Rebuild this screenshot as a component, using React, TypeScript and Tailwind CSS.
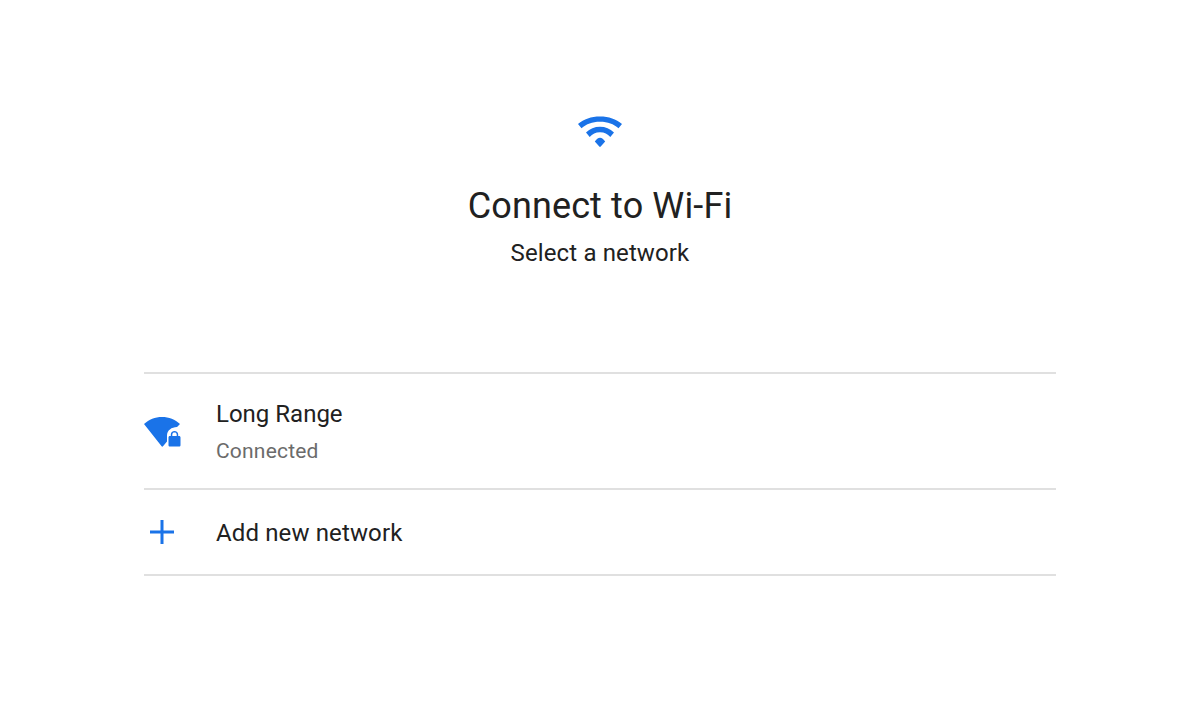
import React from 'react';

const font = "font-['Roboto',sans-serif]";

const WifiIcon = () => (
  <svg width="48" height="36" viewBox="0 0 48 36" fill="#1a73e8">
    <path d="M2 12 C8 7 15 4.500 24 4.500 C33 4.500 40 7 46 12 L42.500 16.300 C37.500 12 32 9.700 24 9.700 C16 9.700 10.500 12 5.500 16.300 Z" />
    <path d="M10 20.500 C14 16.800 18.500 14.800 24 14.800 C29.500 14.800 34 16.800 38 20.500 L34.300 25 C31.500 21.800 28.500 20.200 24 20.200 C19.500 20.200 16.500 21.800 13.700 25 Z" />
    <path d="M18.800 29.500 C20.500 27.200 22 25.800 24 25.800 C26 25.800 27.500 27.200 29.200 29.500 L24.700 34.500 C24.300 35 23.700 35 23.300 34.500 Z" />
  </svg>
);

const WifiLockIcon = () => (
  <svg width="38" height="36" viewBox="0 0 38 36">
    <path
      fill="#1a73e8"
      d="M0 10 C5 5.500 11 3 18 3 C25 3 31 5.500 36 10 L33 13 C27.500 13 23 16.500 23 21.500 L23 27.500 L19 32.300 C18.600 32.800 18 32.800 17.600 32.300 Z"
    />
    <path
      fill="#1a73e8"
      fillRule="evenodd"
      transform="translate(0 2)"
      d="M26 20 L26.800 20 L26.800 18.500 C26.800 16.300 28.500 15 30.500 15 C32.500 15 34.200 16.300 34.200 18.500 L34.200 20 L35 20 C36 20 36.500 20.600 36.500 21.500 L36.500 29 C36.500 30 36 30.500 35 30.500 L26 30.500 C25 30.500 24.500 30 24.500 29 L24.500 21.500 C24.500 20.600 25 20 26 20 Z M28.300 20 L32.700 20 L32.700 18.500 C32.700 17 31.700 16.400 30.500 16.400 C29.300 16.400 28.300 17 28.300 18.500 Z"
    />
  </svg>
);

const PlusIcon = () => (
  <svg width="24" height="24" viewBox="0 0 24 24" fill="#1a73e8">
    <path d="M10.500 0 H13.500 V10.500 H24 V13.500 H13.500 V24 H10.500 V13.500 H0 V10.500 H10.500 Z" />
  </svg>
);

const App = () => {
  return (
    <div className={`${font} w-full h-[713px] bg-white overflow-hidden flex flex-col items-center`}>
      <div className="mt-[112px] h-[36px]">
        <WifiIcon />
      </div>

      <h1 className="mt-[36px] text-[36px] leading-[44px] font-normal tracking-[0.13px] text-[#212121]">Connect to Wi-Fi</h1>
      <p className="mt-[9px] text-[24px] leading-[32px] tracking-[0.13px] text-[#212121]">Select a network</p>

      <div className="mt-[103px] w-[912px] flex flex-col border-t-2 border-[#e0e0e0]">
        <div className="h-[116px] pt-[24px] flex items-start border-b-2 border-[#e0e0e0]">
          <div className="w-[72px] mt-[16px]">
            <WifiLockIcon />
          </div>
          <div className="flex flex-col">
            <span className="text-[24px] leading-[32px] text-[#212121]">Long Range</span>
            <span className="mt-[6px] text-[21px] leading-[30px] tracking-[0.2px] text-[#6b6b6b]">Connected</span>
          </div>
        </div>
        <div className="h-[86px] flex items-center border-b-2 border-[#e0e0e0]">
          <div className="w-[72px] pl-[6px] flex">
            <PlusIcon />
          </div>
          <span className="pt-[2px] text-[24px] leading-[32px] tracking-[0.13px] text-[#212121]">Add new network</span>
        </div>
      </div>
    </div>
  );
};

export default App;
